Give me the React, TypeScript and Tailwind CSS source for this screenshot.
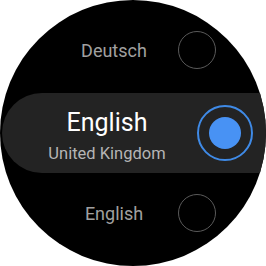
export default function App() {
  return (
    <div className="w-[266px] h-[266px] bg-white">
      <div
        className="w-[266px] h-[266px] rounded-full bg-black overflow-hidden flex flex-col"
        style={{ fontFamily: "Roboto, 'Noto Sans', sans-serif" }}
      >
        {/* other languages above */}
        <div className="mt-[31px] h-[38px] flex items-center pl-[50px]">
          <span className="w-[128px] text-center text-[18px] text-[#a0a0a0]">Deutsch</span>
          <span className="w-[38px] h-[38px] rounded-full border border-[#5a5a5a]" />
        </div>

        {/* selected item */}
        <div className="mt-[24px] ml-[2px] w-[300px] h-[80px] shrink-0 rounded-full bg-[#232323] flex items-center pl-[20px]">
          <div className="w-[170px] pt-[6px] flex flex-col items-center">
            <span className="text-[25px] leading-[30px] text-white">English</span>
            <span className="text-[16.5px] leading-[20px] mt-[6px] text-[#b5b5b5]">United Kingdom</span>
          </div>
          <div className="ml-[5px] w-[56px] h-[56px] rounded-full border-2 border-[#3f8ae6] flex items-center justify-center">
            <span className="w-[32px] h-[32px] rounded-full bg-[#4892f4]" />
          </div>
        </div>

        {/* next item */}
        <div className="mt-[21px] h-[38px] flex items-center pl-[50px]">
          <span className="w-[128px] text-center text-[18px] text-[#a0a0a0]">English</span>
          <span className="w-[38px] h-[38px] rounded-full border border-[#5a5a5a]" />
        </div>
      </div>
    </div>
  );
}
